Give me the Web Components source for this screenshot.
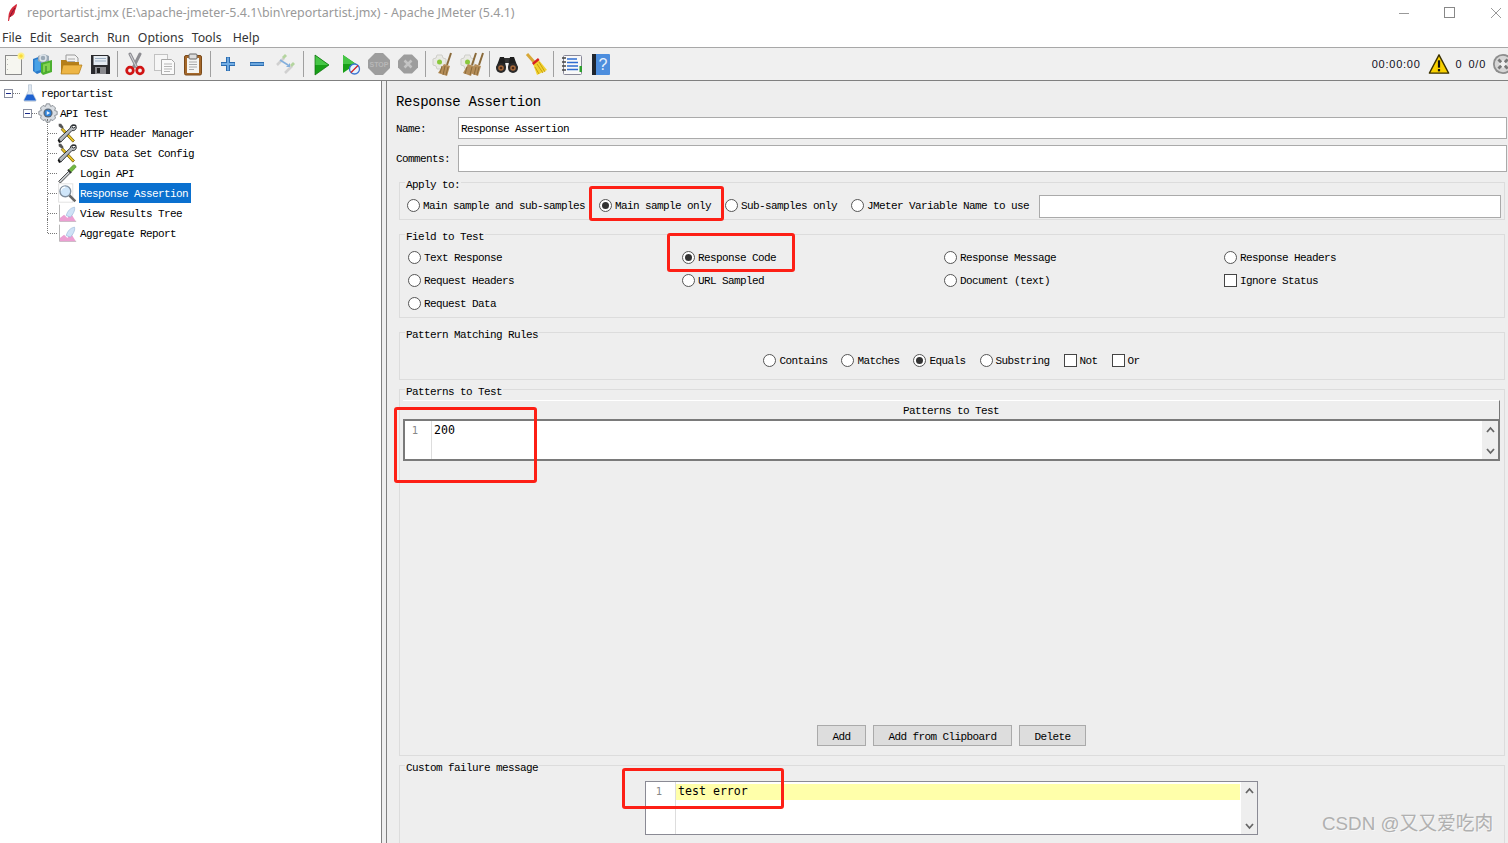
<!DOCTYPE html>
<html>
<head>
<meta charset="utf-8">
<title>Apache JMeter</title>
<style>
  html, body { margin: 0; height: 100%; overflow: hidden; background: #fff; }
</style>
</head>
<body>
<jm-app>
  <jm-titlebar>reportartist.jmx (E:\apache-jmeter-5.4.1\bin\reportartist.jmx) - Apache JMeter (5.4.1)</jm-titlebar>
  <jm-menubar>
    <span>File</span><span>Edit</span><span>Search</span><span>Run</span><span>Options</span><span>Tools</span><span style="margin-left:3px">Help</span>
  </jm-menubar>
  <jm-toolbar></jm-toolbar>
  <jm-split>
    <jm-tree slot="left">
      <jm-tree-node level="0" icon="flask" expander>reportartist</jm-tree-node>
      <jm-tree-node level="1" icon="gear" expander>API Test</jm-tree-node>
      <jm-tree-node level="2" icon="tools">HTTP Header Manager</jm-tree-node>
      <jm-tree-node level="2" icon="tools">CSV Data Set Config</jm-tree-node>
      <jm-tree-node level="2" icon="pipette">Login API</jm-tree-node>
      <jm-tree-node level="2" icon="lens" selected>Response Assertion</jm-tree-node>
      <jm-tree-node level="2" icon="graph">View Results Tree</jm-tree-node>
      <jm-tree-node level="2" icon="graph" last>Aggregate Report</jm-tree-node>
    </jm-tree>
    <jm-assertion-panel slot="right"></jm-assertion-panel>
  </jm-split>
  <jm-callout style="left:589px;top:186px;width:135px;height:35px"></jm-callout>
  <jm-callout style="left:667px;top:233px;width:128px;height:39px"></jm-callout>
  <jm-callout style="left:394px;top:407px;width:143px;height:76px"></jm-callout>
  <jm-callout style="left:622px;top:768px;width:162px;height:41px"></jm-callout>
  <jm-watermark>CSDN @又又爱吃肉</jm-watermark>
</jm-app>

<script>
const SWING_FONT = `font: 11px/14px "Liberation Mono", monospace; letter-spacing: -0.6px; color: #000;`

// All the little pictures of the toolbar and the tree, on a 24 unit grid.
const ICONS = {
  newdoc: `<rect x="4.500" y="3.500" width="16" height="19" fill="#f6f6f0" stroke="#8a8a8a"/><path d="M6.500 7v1M6.500 12v1M6.500 17v1" stroke="#bbb"/><circle cx="20" cy="4" r="3.500" fill="#fdf08a"/><circle cx="20" cy="4" r="1.800" fill="#f8d93a"/>`,
  templates: `<path d="M3 7l8-3 3 2v13l-7 3-4-3z" fill="#2a78c8"/><path d="M4.500 8l6-2v12l-6 2z" fill="#49a2e6"/><path d="M8 4l6-2 5 2v5l-7 2-4-2z" fill="#9aa9b6"/><circle cx="13" cy="6" r="3" fill="none" stroke="#dde4ea" stroke-width="1.500"/><path d="M11 11l11-3v12l-9 3-2-2z" fill="#4cb030"/><path d="M13 12.500l7-2v8l-7 2z" fill="#82d450"/><path d="M16 14v6" stroke="#2c7f1c"/>`,
  open: `<path d="M7 3h9l3 3v9H7z" fill="#f2f2f2" stroke="#999"/><path d="M9 7h7M9 9.500h7M9 12h7" stroke="#aaa"/><path d="M2 8h5l2 2h11v11a1 1 0 0 1-1 1H3a1 1 0 0 1-1-1z" fill="#b57f1a"/><path d="M2 22l2-9h19l-3 8.500a1 1 0 0 1-1 .5z" fill="#edb545" stroke="#b07a16" stroke-width=".7"/>`,
  save: `<path d="M3 3h17l2 2v17H3z" fill="#2b2b2e"/><rect x="5.500" y="4" width="14" height="9" fill="#e6ecf2"/><path d="M7 6.500h11M7 9h11" stroke="#9db0c2"/><rect x="7" y="15" width="11" height="7" fill="#8a8a8e"/><rect x="9" y="16" width="3" height="5" fill="#222"/>`,
  cut: `<path d="M7 2l6.500 13M17 2l-6.500 13" stroke="#8d8d92" stroke-width="3" stroke-linecap="round"/><path d="M7 2l6.500 13" stroke="#d8d8dc"/><circle cx="7" cy="18.500" r="3.300" fill="none" stroke="#d11414" stroke-width="2.800"/><circle cx="17" cy="18.500" r="3.300" fill="none" stroke="#d11414" stroke-width="2.800"/>`,
  copy: `<rect x="2.500" y="2.500" width="13" height="16" fill="#f6f6f6" stroke="#c2c2c2"/><path d="M9.500 7.500h10l3 3v12h-13z" fill="#fafafa" stroke="#a8a8a8"/><path d="M12 12h8M12 14.500h8M12 17h8M12 19.500h6" stroke="#b5b5b5"/>`,
  paste: `<rect x="3.500" y="3.500" width="17" height="19.500" rx="1.500" fill="#a5682a" stroke="#7a4a1a"/><rect x="6" y="6" width="12" height="15" fill="#f5f5f2"/><path d="M8 10h8M8 12.500h8M8 15h8M8 17.500h5" stroke="#aaa"/><rect x="8" y="2" width="8" height="5" rx="1" fill="#ddd" stroke="#666"/>`,
  plus: `<path d="M12 5v14M5 12h14" stroke="#2b6cb0" stroke-width="4"/><path d="M12 5.500v13M5.500 12h13" stroke="#74aee4" stroke-width="1.800"/>`,
  minus: `<path d="M5 12h14" stroke="#2b6cb0" stroke-width="4"/><path d="M5.500 12h13" stroke="#74aee4" stroke-width="1.800"/>`,
  toggle: `<g opacity=".6"><path d="M3 13l7-7" stroke="#bbb" stroke-width="2.500"/><path d="M8 5l3-3 2 2-3 3z" fill="#8dc46a"/><path d="M11 21l7-7" stroke="#bbb" stroke-width="2.500"/><path d="M16 13l3-3 2 2-3 3z" fill="#8dc46a"/><path d="M6 8l8 5" stroke="#3c84d0" stroke-width="1.500"/><path d="M12 15h4v-4z" fill="#3c84d0"/></g>`,
  start: `<path d="M6 3l14 10L6 23z" fill="#18a018"/><path d="M6 3l14 10H6z" fill="#46c646"/><path d="M6 3l14 10L6 23z" fill="none" stroke="#0b6e0b" stroke-width=".7"/>`,
  starttimer: `<path d="M5 3l13 9-13 9z" fill="#18a018"/><path d="M5 3l13 9H5z" fill="#46c646"/><circle cx="16.500" cy="17" r="5" fill="#e8f2fc" stroke="#3c74d0" stroke-width="1.300"/><path d="M13 20.500l7-7" stroke="#d02020" stroke-width="1.300"/>`,
  stop: `<path d="M8 1h8l7 7v8l-7 7H8l-7-7V8z" fill="#9d9d9d"/><text x="12" y="14.500" font-size="7" font-family="Liberation Sans" font-weight="700" text-anchor="middle" fill="#b8b8b8">STOP</text>`,
  shutdown: `<path d="M8 2.500h8l6 6v7l-6 6H8l-6-6v-7z" fill="#9d9d9d"/><path d="M8.500 8.500l7 7M15.500 8.500l-7 7" stroke="#c4c4c4" stroke-width="2.500"/>`,
  clear: `<path d="M2 7l3-1 1-3h5l1 3 3 1v6l-3 1-1 3H6l-1-3-3-1z" fill="#e9e9e4" stroke="#cfcfca"/><circle cx="8.500" cy="10" r="2.500" fill="#8ac83c"/><path d="M20 1l-4 12" stroke="#8a6a3a" stroke-width="2"/><path d="M13 12l6 2-3 10-9-3z" fill="#b58d58"/><path d="M11 14l-2 7M14 14l-2 9M17 15l-2 8" stroke="#8a6a3a"/>`,
  clearall: `<path d="M1 7l3-1 1-3h5l1 3 3 1v6l-3 1-1 3H5l-1-3-3-1z" fill="#e9e9e4" stroke="#cfcfca"/><circle cx="7.500" cy="10" r="2.500" fill="#8ac83c"/><path d="M16 1l-4 12M23 1l-4 12" stroke="#8a6a3a" stroke-width="2"/><path d="M8 12l6 2-3 10-8-3z" fill="#b58d58"/><path d="M15 12l6 2-3 10-8-3z" fill="#b58d58"/><path d="M7 15l-2 7M12 15l-2 8M16 15l-2 8M19 15l-2 8" stroke="#8a6a3a"/>`,
  search: `<path d="M9 6h6v5H9z" fill="#333"/><path d="M5 5h4l1 5 1 6H1z" fill="#1e1e1e"/><path d="M15 5h4l4 11H13l1-6z" fill="#1e1e1e"/><circle cx="6" cy="16" r="5" fill="#2a2a2a"/><circle cx="18" cy="16" r="5" fill="#2a2a2a"/><circle cx="6" cy="16" r="2.800" fill="#a5683a"/><circle cx="18" cy="16" r="2.800" fill="#a5683a"/><circle cx="6" cy="16" r="1.300" fill="#4a2a18"/><circle cx="18" cy="16" r="1.300" fill="#4a2a18"/>`,
  broom: `<path d="M3 2l7 8" stroke="#d8a838" stroke-width="3"/><path d="M9 12l5-5 9 11-10 5z" fill="#f2d22e"/><path d="M13 12l6 9M11 15l4 7M15 10l6 10" stroke="#c8a010"/><path d="M8 11l6-5 1.500 2-6 5z" fill="#d82020"/>`,
  functions: `<rect x="4.500" y="3.500" width="18" height="19" rx="1" fill="#f8f8f8" stroke="#889"/><path d="M8 7h10M8 10.500h11M8 14h11M8 17.500h11" stroke="#2e6cd0" stroke-width="1.300"/><path d="M3 6h4M3 10h4M3 14h4M3 18h4" stroke="#444" stroke-width="1.300"/><rect x="20.500" y="14" width="2.500" height="6" fill="#2ea02e"/>`,
  help: `<rect x="4" y="2" width="18" height="21" rx="1" fill="#4d8ede"/><rect x="4" y="2" width="4" height="21" fill="#20262e"/><text x="15" y="18" font-size="16" font-family="Liberation Sans" text-anchor="middle" fill="#e8f1fb">?</text>`,
  warning: `<path d="M12 2L1.500 22h21z" fill="#f8d000" stroke="#3a3000" stroke-width="1.500" stroke-linejoin="round"/><path d="M12 8v8" stroke="#111" stroke-width="2.400"/><path d="M12 17.500v2.500" stroke="#111" stroke-width="2.400"/>`,
  indicator: `<circle cx="12" cy="12" r="11" fill="#8d8d8d"/><circle cx="12" cy="12" r="9" fill="#d6d6d6"/><circle cx="12" cy="12" r="4" fill="#efefef"/><path d="M7 7l3 3M17 7l-3 3M7 17l3-3M17 17l-3-3" stroke="#777" stroke-width="3"/>`,
  flask: `<path d="M10 1h4v8l6 12a1.500 1.500 0 0 1-1 2H5a1.500 1.500 0 0 1-1-2l6-12z" fill="#dfe8f2" stroke="#9fb0c2" stroke-width=".7"/><path d="M8 14h8l4 8H4z" fill="#1f62d0"/>`,
  gear: `<path d="M10 1h4l1 3 3-1 3 3-1 3 3 1v4l-3 1 1 3-3 3-3-1-1 3h-4l-1-3-3 1-3-3 1-3-3-1v-4l3-1-1-3 3-3 3 1z" fill="#d9dde2" stroke="#7c8288"/><circle cx="12" cy="12" r="5.500" fill="#5a6878"/><circle cx="12" cy="12" r="4" fill="#2f82d8"/><path d="M10.500 9.500l4 2.500-4 2.500z" fill="#e8f2fc"/>`,
  tools: `<path d="M2 1l3 0 3 4-2 2-4-3z" fill="#555"/><path d="M7 6l14 15-2 2L5 8z" fill="#e8c020" stroke="#4e4000" stroke-width=".8"/><path d="M23 3c-3-2-7-1-7 3L2 19l2.500 4L18 9c3 1 6-2 5-5l-3 2-2-1 0-2z" fill="#b4b8bc" stroke="#23272b" stroke-width="1.100"/><path d="M2 19l2.500 4-2 1-1.500-3z" fill="#111"/>`,
  pipette: `<path d="M2 22l12-12 2 2L4 24z" fill="#c8ccd0" stroke="#333" stroke-width="1"/><path d="M14 8l5-5c1-1 2-1 3 0s1 2 0 3l-5 5z" fill="#72b840" stroke="#3c7a1c" stroke-width=".7"/><path d="M13 8l4 4" stroke="#333" stroke-width="2"/>`,
  lens: `<rect x="2" y="1" width="17" height="22" fill="#fff" stroke="#ddd"/><circle cx="10" cy="10" r="6.500" fill="#cfe6fa" stroke="#7f8e9e" stroke-width="1.600"/><path d="M5 9a5 5 0 0 1 5-4" stroke="#fff" fill="none" stroke-width="1.400"/><path d="M15 15l7 7" stroke="#666" stroke-width="3"/>`,
  graph: `<path d="M3 2v20h20" fill="none" stroke="#aaa"/><path d="M3.500 22v-4l5-4 4 4 4-6 6 10z" fill="#ec9fd2"/><path d="M11 15c2-6 5-9 10-10 1 4-2 9-5 12z" fill="#cfe2f6" stroke="#8fb0d4" stroke-width=".7"/>`
}

/**
 * Base for every element: opens a shadow root and fills it.
 */
class ShadowElement extends HTMLElement {
  /**
   * Creates the shadow root from what render() returns.
   */
  connectedCallback () {
    if (this.shadowRoot) return
    this.attachShadow({ mode: 'open' }).innerHTML = this.render()
  }
}

customElements.define('jm-icon', class extends ShadowElement {
  render () {
    const size = this.getAttribute('size') || 24
    return `<style>:host { display: inline-flex; flex: none; } svg { display: block; }</style>
      <svg width="${size}" height="${size}" viewBox="0 0 24 24" aria-hidden="true">${ICONS[this.getAttribute('name')]}</svg>`
  }
})

customElements.define('jm-app', class extends ShadowElement {
  render () {
    return `<style>
      :host { display: flex; flex-direction: column; position: relative; width: 1508px; height: 843px; overflow: hidden; }
    </style><slot></slot>`
  }
})

customElements.define('jm-titlebar', class extends ShadowElement {
  render () {
    return `<style>
      :host { display: flex; align-items: center; flex: none; height: 28px; box-sizing: border-box; padding: 0 0 3px 7px; background: #fff; }
      .title { margin-left: 9px; font: 12.450px "Noto Sans", sans-serif; color: #999; white-space: pre; }
      .controls { display: flex; margin-left: auto; padding-right: 6px; }
      .controls svg { display: block; margin-left: 34px; }
    </style>
    <svg width="11" height="18" viewBox="0 0 11 18"><path d="M10 0C6 2 2 6 1.500 12L1 17l1 0 1-4c3-1 5-3 5-6 1-3 2-5 2-7z" fill="#d42a3a"/><path d="M8 4C6 7 4 10 3 13" stroke="#7a1230" fill="none"/></svg>
    <span class="title"><slot></slot></span>
    <div class="controls">
      <svg width="12" height="12"><path d="M1 6.500h10" stroke="#999"/></svg>
      <svg width="12" height="12"><rect x=".5" y=".5" width="10" height="10" fill="none" stroke="#888"/></svg>
      <svg width="12" height="12"><path d="M1 1l10 10M11 1L1 11" stroke="#999"/></svg>
    </div>`
  }
})

customElements.define('jm-menubar', class extends ShadowElement {
  render () {
    return `<style>
      :host { display: flex; align-items: center; gap: 8.100px; flex: none; height: 19px; box-sizing: border-box; padding: 0 0 0 2px; background: #fff; font: 12.300px "Noto Sans", sans-serif; color: #333; }
    </style><slot></slot>`
  }
})

customElements.define('jm-toolbar', class extends ShadowElement {
  render () {
    const groups = [
      ['newdoc', 'templates', 'open', 'save'],
      ['cut', 'copy', 'paste'],
      ['plus', 'minus', 'toggle'],
      ['start', 'starttimer', 'stop', 'shutdown'],
      ['clear', 'clearall'],
      ['search', 'broom'],
      ['functions', 'help']
    ]
    const tools = groups
      .map(group => group.map(name => `<span class="tool"><jm-icon name="${name}"></jm-icon></span>`).join(''))
      .join('<i class="sep"></i>')
    return `<style>
      :host { display: flex; align-items: center; flex: none; height: 34px; box-sizing: border-box; padding-left: 0; background: #f0f0f0; border-top: 1px solid #a8a8a8; border-bottom: 1px solid #808080; }
      .tools { display: flex; align-items: center; margin-left: -1.500px; }
      .tool { display: flex; justify-content: center; width: 29px; }
      .sep { width: 1px; height: 26px; margin: 0 2.500px; background: #a0a0a0; }
      .status { display: flex; align-items: center; margin: 0 -6px 0 auto; font: 11px "Liberation Sans", sans-serif; letter-spacing: .75px; color: #112; }
      .warn { margin: 0 6px 0 7px; }
      .errs { margin-right: 6px; }
      .ind { margin-left: 6px; }
    </style>
    <div class="tools">${tools}</div>
    <div class="status">
      <span>00:00:00</span>
      <jm-icon class="warn" name="warning" size="22"></jm-icon>
      <span class="errs">0</span>
      <span>0/0</span>
      <jm-icon class="ind" name="indicator" size="22"></jm-icon>
    </div>`
  }
})

customElements.define('jm-split', class extends ShadowElement {
  render () {
    return `<style>
      :host { display: flex; flex: 1; min-height: 0; background: #eee; }
      .left { flex: none; width: 381px; border-right: 1px solid #808080; background: #fff; }
      .right { flex: 1; min-width: 0; margin-left: 4px; border-left: 1px solid #808080; }
    </style>
    <div class="left"><slot name="left"></slot></div>
    <div class="right"><slot name="right"></slot></div>`
  }
})

customElements.define('jm-tree', class extends ShadowElement {
  render () {
    return `<style>:host { display: block; padding-top: 2px; }</style><slot></slot>`
  }
})

customElements.define('jm-tree-node', class extends ShadowElement {
  render () {
    const level = Number(this.getAttribute('level'))
    const expander = this.hasAttribute('expander')
      ? `<svg class="exp" width="9" height="9"><rect x=".5" y=".5" width="8" height="8" fill="#fff" stroke="#8a8fa0"/><path d="M2 4.500h5" stroke="#1a2a8a"/></svg><i class="stub"></i>`
      : ''
    const lines = level === 2 ? `<i class="v${this.hasAttribute('last') ? ' half' : ''}"></i><i class="h"></i>` : ''
    const left = [4, 23, 57][level]
    const iconSize = [18, 20, 20][level]
    return `<style>
      :host { display: flex; align-items: center; position: relative; height: 20px; padding-left: ${left}px; ${SWING_FONT} }
      .exp { flex: none; }
      .stub { flex: none; width: ${level ? 5 : 7}px; margin-right: 1px; border-top: 1px dotted #777; }
      .v { position: absolute; left: 47px; top: -4px; bottom: 0; border-left: 1px dotted #777; }
      .v.half { bottom: 10px; }
      .h { position: absolute; left: 48px; top: 10px; width: 9px; border-top: 1px dotted #777; }
      .label { margin-left: ${[1, 1, 2][level]}px; height: 20px; line-height: 22px; padding: 0 3px 0 1px; white-space: pre; }
      .sel { background: #0a70cf; color: #fff; }
    </style>
    ${lines}${expander}
    <jm-icon name="${this.getAttribute('icon')}" size="${iconSize}"></jm-icon>
    <span class="label${this.hasAttribute('selected') ? ' sel' : ''}"><slot></slot></span>`
  }
})

customElements.define('jm-field', class extends ShadowElement {
  render () {
    return `<style>
      :host { display: block; height: var(--h, 22px); box-sizing: border-box; border: 1px solid #aaa; background: #fff; padding: 1px 2px 0; ${SWING_FONT} line-height: 21px; overflow: hidden; white-space: pre; }
    </style><slot></slot>`
  }
})

customElements.define('jm-group', class extends ShadowElement {
  render () {
    return `<style>
      :host { display: block; position: relative; flex: none; box-sizing: border-box; margin: 0 2px 0 3px; border: 1px solid #dcdcdc; ${SWING_FONT} }
      .legend { position: absolute; left: 5px; top: -5px; padding: 0 1px; background: #eee; white-space: pre; }
    </style>
    <span class="legend">${this.getAttribute('label')}</span>
    <slot></slot>`
  }
})

customElements.define('jm-radio', class extends ShadowElement {
  render () {
    const dot = this.hasAttribute('checked') ? '<circle cx="6.500" cy="6.500" r="3.500" fill="#333"/>' : ''
    return `<style>
      :host { display: inline-flex; align-items: center; gap: 3px; height: 20px; white-space: pre; ${SWING_FONT} }
      svg { flex: none; display: block; margin-top: -1px; }
    </style>
    <svg width="13" height="13"><circle cx="6.500" cy="6.500" r="6" fill="#fff" stroke="#555"/>${dot}</svg><span><slot></slot></span>`
  }
})

customElements.define('jm-check', class extends ShadowElement {
  render () {
    return `<style>
      :host { display: inline-flex; align-items: center; gap: 3px; height: 20px; white-space: pre; ${SWING_FONT} }
      i { flex: none; width: 11px; height: 11px; margin-top: -1px; border: 1px solid #444; background: #fff; }
    </style><i></i><span><slot></slot></span>`
  }
})

customElements.define('jm-button', class extends ShadowElement {
  render () {
    return `<style>
      :host { display: inline-flex; align-items: center; height: 21px; box-sizing: border-box; padding: 2px 14.500px 0; border: 1px solid #aaa; background: #ddd; white-space: pre; ${SWING_FONT} }
    </style><slot></slot>`
  }
})

customElements.define('jm-table-head', class extends ShadowElement {
  render () {
    return `<style>
      :host { display: flex; flex: none; align-items: center; justify-content: center; height: 19px; box-sizing: border-box; padding-top: 1px; border-top: 1px solid #fff; border-right: 1px solid #777; background: #eee; white-space: pre; ${SWING_FONT} }
    </style><slot></slot>`
  }
})

customElements.define('jm-editor', class extends ShadowElement {
  render () {
    const heavy = this.hasAttribute('heavy')
    const codeBg = this.hasAttribute('highlight') ? 'background: #ffffaa;' : ''
    return `<style>
      :host { display: flex; flex: none; box-sizing: border-box; height: var(--h, 42px); width: var(--w, auto); background: #fff; border: ${heavy ? '2px solid #7a7a7a' : '1px solid #8a8a94'}; letter-spacing: 0; }
      .gutter { flex: none; box-sizing: border-box; width: var(--gutter, 27px); padding-top: var(--pad, 2px); padding-right: var(--num-r, 13px); border-right: 1px solid #ddd; text-align: right; font: 10.500px/15px "DejaVu Sans Mono", monospace; color: #888; }
      .body { flex: 1; min-width: 0; padding-top: var(--pad, 2px); }
      .code { height: 16px; padding-left: 2px; font: 11.600px/15px "DejaVu Sans Mono", monospace; color: #000; white-space: pre; ${codeBg} }
      .bar { flex: none; display: flex; flex-direction: column; justify-content: space-between; align-items: center; width: 16px; margin-left: 1px; box-sizing: border-box; padding: 4px 0 3px; background: #eee; }
      svg { display: block; }
    </style>
    <div class="gutter">1</div>
    <div class="body"><div class="code"><slot></slot></div></div>
    <div class="bar">
      <svg width="9" height="10"><path d="M1 7l3.500-4L8 7" fill="none" stroke="#666" stroke-width="1.800"/></svg>
      <svg width="9" height="10"><path d="M1 3l3.500 4L8 3" fill="none" stroke="#666" stroke-width="1.800"/></svg>
    </div>`
  }
})

customElements.define('jm-callout', class extends ShadowElement {
  render () {
    return `<style>
      :host { display: block; position: absolute; box-sizing: border-box; border: 3px solid #fd1f15; border-radius: 3px; }
    </style>`
  }
})

customElements.define('jm-watermark', class extends ShadowElement {
  render () {
    return `<style>
      :host { position: absolute; left: 1322px; top: 810px; font: 18.800px/28px "Liberation Sans", "Noto Sans CJK SC", sans-serif; color: #b0b0b0; white-space: pre; text-shadow: 1px 1px 0 rgba(255, 255, 255, .5); }
    </style><slot></slot>`
  }
})

customElements.define('jm-assertion-panel', class extends ShadowElement {
  render () {
    return `<style>
      :host { display: flex; flex-direction: column; height: 762px; box-sizing: border-box; padding: 10px 1px 0 9px; background: #eee; overflow: hidden; }
      h1 { flex: none; margin: 0; height: 20px; font: 14px/22px "Liberation Mono", monospace; letter-spacing: -.35px; color: #000; font-weight: 400; }
      .row { display: flex; flex: none; align-items: center; }
      .row label { flex: none; width: 62px; ${SWING_FONT} }
      .row jm-field { flex: 1; }
      .name { margin-top: 6px; --h: 22px; }
      .name label { padding-top: 1px; }
      .comments { margin-top: 6px; --h: 27px; }
      .apply { display: flex; align-items: center; margin-top: 10px; height: 38px; padding: 10px 3px 0 7px; box-sizing: border-box; }
      .apply-row { display: flex; align-items: center; gap: 14px; height: 23px; }
      .apply-row jm-field { width: 462px; --h: 23px; margin-left: -4px; }
      .fields { margin-top: 14px; height: 84px; padding: 11px 0 0 8px; box-sizing: border-box; }
      .fields-grid { display: grid; grid-template-columns: 274px 262px 280px 1fr; grid-auto-rows: 23px; align-items: center; }
      .rules { margin-top: 14px; height: 48px; padding-top: 18px; box-sizing: border-box; }
      .rules-row { display: flex; justify-content: center; gap: 14px; margin-left: -1px; }
      .patterns { display: flex; flex-direction: column; margin-top: 9px; height: 367px; padding: 10px 4px 0 3px; box-sizing: border-box; }
      .buttons { display: flex; justify-content: center; gap: 7px; margin-top: auto; margin-bottom: 9px; }
      .failure { margin-top: 9px; height: 120px; padding-top: 15px; box-sizing: border-box; }
      .failure-row { display: flex; justify-content: center; margin-left: -1px; }
      .failure-row jm-editor { --w: 613px; --h: 54px; --gutter: 30px; --pad: 2px; --num-r: 13px; }
    </style>
    <h1>Response Assertion</h1>
    <div class="row name"><label>Name:</label><jm-field>Response Assertion</jm-field></div>
    <div class="row comments"><label>Comments:</label><jm-field></jm-field></div>
    <jm-group class="apply" label="Apply to:">
      <div class="apply-row">
        <jm-radio>Main sample and sub-samples</jm-radio>
        <jm-radio checked>Main sample only</jm-radio>
        <jm-radio>Sub-samples only</jm-radio>
        <jm-radio>JMeter Variable Name to use</jm-radio>
        <jm-field></jm-field>
      </div>
    </jm-group>
    <jm-group class="fields" label="Field to Test">
      <div class="fields-grid">
        <jm-radio>Text Response</jm-radio>
        <jm-radio checked>Response Code</jm-radio>
        <jm-radio>Response Message</jm-radio>
        <jm-radio>Response Headers</jm-radio>
        <jm-radio>Request Headers</jm-radio>
        <jm-radio>URL Sampled</jm-radio>
        <jm-radio>Document (text)</jm-radio>
        <jm-check>Ignore Status</jm-check>
        <jm-radio>Request Data</jm-radio>
      </div>
    </jm-group>
    <jm-group class="rules" label="Pattern Matching Rules">
      <div class="rules-row">
        <jm-radio>Contains</jm-radio>
        <jm-radio>Matches</jm-radio>
        <jm-radio checked>Equals</jm-radio>
        <jm-radio>Substring</jm-radio>
        <jm-check>Not</jm-check>
        <jm-check>Or</jm-check>
      </div>
    </jm-group>
    <jm-group class="patterns" label="Patterns to Test">
      <jm-table-head>Patterns to Test</jm-table-head>
      <jm-editor heavy>200</jm-editor>
      <div class="buttons">
        <jm-button>Add</jm-button>
        <jm-button>Add from Clipboard</jm-button>
        <jm-button>Delete</jm-button>
      </div>
    </jm-group>
    <jm-group class="failure" label="Custom failure message">
      <div class="failure-row"><jm-editor highlight>test error</jm-editor></div>
    </jm-group>`
  }
})
</script>
</body>
</html>
